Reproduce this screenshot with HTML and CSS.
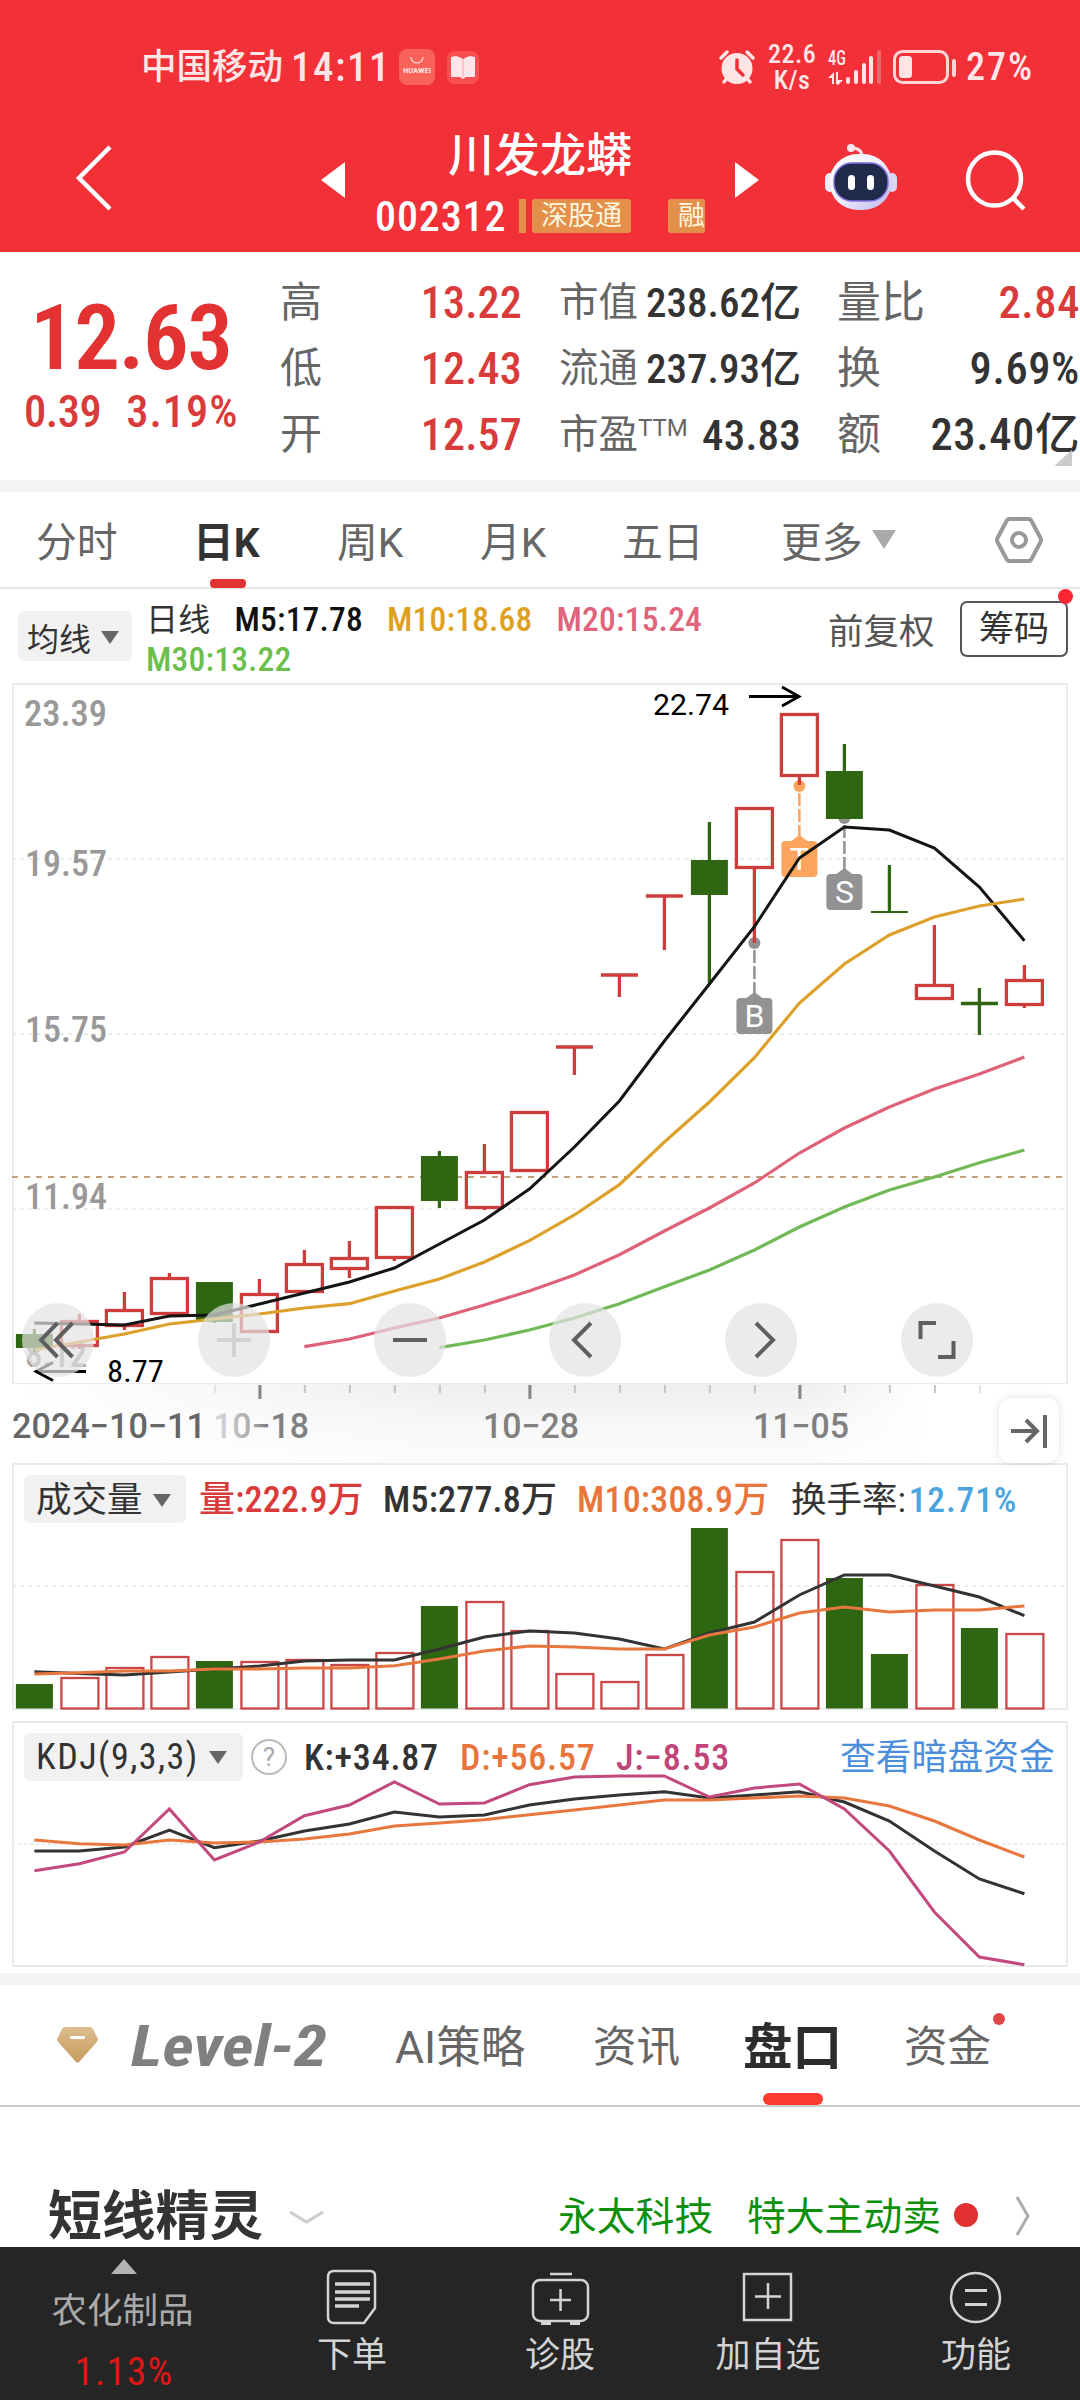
FILE: index.html
```html
<!DOCTYPE html>
<html lang="zh-CN">
<head>
<meta charset="utf-8">
<title>川发龙蟒 002312</title>
<link rel="stylesheet" href="styles.css">
</head>
<body>
<header class="top">
  <div class="status">
    <span class="carrier">中国移动</span><span class="clock">14:11</span>
    <svg class="app1" width="36" height="36" viewBox="0 0 36 36"><rect width="36" height="36" rx="8" fill="#f86258"/><path d="M12 8a6 6 0 0 0 12 0" fill="none" stroke="#ffc9c5" stroke-width="1.5"/><text x="4" y="24" textLength="28" lengthAdjust="spacingAndGlyphs" font-size="7" font-weight="700" fill="#ffe3e0">HUAWEI</text></svg>
    <svg class="app2" width="32" height="33" viewBox="0 0 32 33"><rect width="32" height="33" rx="8" fill="#fa4f50"/><path d="M4 6l5-1 3 1 4 2 4-2 3-1 5 1v20h-9l-3 2-3-2H4z" fill="#ffe6ea"/><path d="M16 8v18" stroke="#f9bcc5" stroke-width="1.5"/></svg>
    <svg class="alarm" width="36" height="34" viewBox="0 0 36 34"><circle cx="18" cy="18.500" r="15.500" fill="#ffe6e6"/><path d="M2 8l6-6M34 8l-6-6M5 32l4-5M31 32l-4-5" stroke="#ffe6e6" stroke-width="3.500" stroke-linecap="round"/><path d="M18 10v9l6 6" fill="none" stroke="#f13038" stroke-width="3.500" stroke-linecap="round"/></svg>
    <span class="rate">22.6<br>K/s</span>
    <svg class="signal" width="54" height="36" viewBox="0 0 54 36" fill="#ffe6e6"><text x="0" y="16" font-size="20" font-weight="500" textLength="18" lengthAdjust="spacingAndGlyphs">4G</text><path d="M4 35V29H0l6-6v12zM10 23v8h5l-5 5-2-1V23z"/><rect x="18" y="28" width="4" height="7" rx="2"/><rect x="26" y="21" width="4" height="14" rx="2"/><rect x="34" y="14" width="4" height="21" rx="2"/><rect x="41" y="7" width="4" height="28" rx="2"/><rect x="49" y="1" width="4" height="34" rx="2" opacity=".3"/></svg>
    <svg class="battery" width="63" height="34" viewBox="0 0 63 34"><rect x="1.500" y="1.500" width="53" height="31" rx="8" fill="none" stroke="#ffd5d7" stroke-width="3"/><rect x="6" y="6" width="13" height="22" rx="3.500" fill="#ffe6e6"/><rect x="59" y="9" width="4" height="18" rx="2" fill="#ffd5d7"/></svg>
    <span class="pct">27%</span>
  </div>
  <nav class="nav">
    <svg class="back" width="37" height="66" viewBox="0 0 37 66"><path d="M34 2L3 33l31 31" fill="none" stroke="#fff" stroke-width="4.500"/></svg>
    <svg class="prev" width="24" height="36" viewBox="0 0 24 36"><path d="M24 0v36L0 18z" fill="#fff"/></svg>
    <div class="title">
      <h1>川发龙蟒</h1>
      <div class="code"><span class="num">002312</span><i class="sliver"></i><span class="tag">深股通</span><span class="tag cut">融</span></div>
    </div>
    <svg class="next" width="24" height="36" viewBox="0 0 24 36"><path d="M0 0v36l24-18z" fill="#fff"/></svg>
    <svg class="robot" width="72" height="67" viewBox="0 0 72 67">
      <defs><linearGradient id="shell" x1="0" y1="0" x2="1" y2="1"><stop offset="0" stop-color="#fff"/><stop offset=".5" stop-color="#f1edfc"/><stop offset="1" stop-color="#b9b5ee"/></linearGradient></defs>
      <path d="M37 13c0-6-3-9-10-9" fill="none" stroke="#fbdbe5" stroke-width="3"/><circle cx="26" cy="4" r="4" fill="#fce6ee"/>
      <rect x="0" y="29" width="10" height="19" rx="5" fill="#ecebf7"/><rect x="62" y="29" width="10" height="19" rx="5" fill="#d9d5f3"/>
      <rect x="4.500" y="10" width="62" height="56" rx="28" fill="url(#shell)"/>
      <rect x="9" y="19" width="54" height="38" rx="18" fill="#202b4b" stroke="#7d6fe0" stroke-width="1.500"/>
      <rect x="23" y="31" width="7" height="15" rx="3.500" fill="#fff"/><rect x="42" y="31" width="7" height="15" rx="3.500" fill="#fff"/>
    </svg>
    <svg class="search" width="60" height="60" viewBox="0 0 60 60"><circle cx="28.500" cy="29" r="26.500" fill="none" stroke="#fff" stroke-width="4.500"/><path d="M47 48l11 11" stroke="#fff" stroke-width="4.500"/></svg>
  </nav>
</header>

<section class="quote">
  <div class="price">
    <div class="last">12.63</div>
    <div class="chg"><span>0.39</span><span class="rise">3.19%</span></div>
  </div>
  <dl class="g1"><div><dt>高</dt><dd class="up">13.22</dd></div><div><dt>低</dt><dd class="up">12.43</dd></div><div><dt>开</dt><dd class="up">12.57</dd></div></dl>
  <dl class="g2"><div><dt>市值</dt><dd>238.62亿</dd></div><div><dt>流通</dt><dd>237.93亿</dd></div><div><dt>市盈<sup>TTM</sup></dt><dd class="pe">43.83</dd></div></dl>
  <dl class="g3"><div><dt>量比</dt><dd class="up">2.84</dd></div><div><dt>换</dt><dd>9.69%</dd></div><div><dt>额</dt><dd>23.40亿</dd></div></dl>
  <i class="fold"></i>
</section>

<nav class="periods">
  <span class="p1">分时</span><span class="p2 on">日K</span><span class="p3">周K</span><span class="p4">月K</span><span class="p5">五日</span><span class="p6">更多</span>
  <svg class="caret" width="24" height="19" viewBox="0 0 24 19"><path d="M0 0h24L12 19z" fill="#aaa"/></svg>
  <svg class="hex" width="48" height="46" viewBox="0 0 48 46" fill="none" stroke="#999" stroke-width="4"><path d="M14.500 2h19q2 0 3 2l9 17q1 2 0 4l-9 17q-1 2-3 2h-19q-2 0-3-2l-9-17q-1-2 0-4l9-17q1-2 3-2z"/><circle cx="24" cy="23" r="7"/></svg>
</nav>

<section class="ma">
  <button class="pill maBtn">均线<svg width="18" height="13" viewBox="0 0 18 13"><path d="M0 0h18L9 13z" fill="#666"/></svg></button>
  <div class="maVals"><span class="k">日线</span><span class="k">M5:17.78</span><span class="y">M10:18.68</span><span class="p">M20:15.24</span><br><span class="g">M30:13.22</span></div>
  <span class="adj">前复权</span>
  <button class="chips">筹码<i></i></button>
</section>

<section class="kline">
  <svg id="kline" width="1080" height="701" viewBox="0 683 1080 701"></svg>
  <div class="ctrls">
    <button><svg viewBox="0 0 72 74"><path d="M35.500 20L19 37l16.500 17M50.500 20L34 37l16.500 17"/></svg></button>
    <button class="off"><svg viewBox="0 0 72 74"><path d="M19 37h34M36 20v34"/></svg></button>
    <button><svg viewBox="0 0 72 74"><path d="M19 37h34"/></svg></button>
    <button><svg viewBox="0 0 72 74"><path d="M42 20L25 37l17 17"/></svg></button>
    <button><svg viewBox="0 0 72 74"><path d="M31 20l17 17-17 17"/></svg></button>
    <button><svg viewBox="0 0 72 74"><path d="M19.500 36V20h15.500M37 54h15.500V38"/></svg></button>
  </div>
</section>

<section class="axis">
  <svg id="axis" width="1080" height="79" viewBox="0 1384 1080 79"></svg>
  <button class="toEnd"><svg width="60" height="64" viewBox="0 0 60 64"><path d="M12 32h26M27 21l11 11-11 11M46 16v33" fill="none" stroke="#666" stroke-width="4"/></svg></button>
</section>

<section class="panel vol">
  <div class="head">
    <button class="pill">成交量<svg width="18" height="13" viewBox="0 0 18 13"><path d="M0 0h18L9 13z" fill="#666"/></svg></button>
    <span class="v1">量:222.9万</span><span class="v2">M5:277.8万</span><span class="v3">M10:308.9万</span><span class="v4">换手率:<b>12.71%</b></span>
  </div>
  <svg id="vol" width="1054" height="184" viewBox="13 1526 1054 184"></svg>
</section>

<section class="panel kdj">
  <div class="head">
    <button class="pill">KDJ(9,3,3)<svg width="18" height="13" viewBox="0 0 18 13"><path d="M0 0h18L9 13z" fill="#666"/></svg></button>
    <span class="help">?</span><span class="k1">K:+34.87</span><span class="k2">D:+56.57</span><span class="k3">J:−8.53</span><a>查看暗盘资金</a>
  </div>
  <svg id="kdj" width="1054" height="196" viewBox="13 1771 1054 196"></svg>
</section>

<nav class="tabs">
  <svg class="gem" width="41" height="36" viewBox="0 0 41 36"><defs><linearGradient id="gold" x1="0" y1="0" x2="0" y2="1"><stop offset="0" stop-color="#dcbd8e"/><stop offset="1" stop-color="#c69a5c"/></linearGradient></defs><path d="M8 0h25q2 0 3 2l5 10q0 2-2 4L22 35q-1.500 1-3 0L2 16q-2-2-2-4L5 2q1-2 3-2z" fill="url(#gold)"/><rect x="13" y="9" width="15" height="3" rx="1" fill="#fff"/></svg>
  <svg class="lv" width="200" height="46" viewBox="0 0 200 46"><text x="1" y="43" font-size="57" font-weight="700" font-style="italic" fill="#808080" textLength="196" lengthAdjust="spacingAndGlyphs">Level-2</text></svg>
  <span class="t1">AI策略</span><span class="t2">资讯</span><span class="t3">盘口</span><span class="t4">资金<i></i></span>
</nav>

<section class="genie">
  <h2>短线精灵</h2>
  <svg class="down" width="35" height="15" viewBox="0 0 35 15"><path d="M1 2l16.500 10L34 2" fill="none" stroke="#ccc" stroke-width="3"/></svg>
  <span class="n1">永太科技</span><span class="n2">特大主动卖</span><i></i>
  <svg class="go" width="16" height="40" viewBox="0 0 16 40"><path d="M2 1l11 19L2 39" fill="none" stroke="#aaa" stroke-width="3"/></svg>
</section>

<footer class="bar">
  <div class="sector"><svg width="26" height="15" viewBox="0 0 26 15"><path d="M0 15h26L13 0z" fill="#b4b4b4"/></svg><span>农化制品</span><b>1.13%</b></div>
  <div><svg width="56" height="56" viewBox="0 0 56 56"><path d="M10 2h36q5 0 5 5v32L40 54H10q-6 0-6-6V8q0-6 6-6z"/><path d="M11 15h35M11 23h35M11 30h35M11 37h24" stroke-width="3.500"/></svg><span>下单</span></div>
  <div><svg width="60" height="56" viewBox="0 0 60 56"><rect x="3" y="11" width="55" height="41" rx="7"/><path d="M30.500 20v22M20 31h21M20 5h22" /><path d="M11 54h10M40 54h10" stroke-width="4"/></svg><span>诊股</span></div>
  <div><svg width="56" height="56" viewBox="0 0 56 56"><rect x="4" y="5" width="47" height="46"/><path d="M28 14v26M15 27.500h26"/></svg><span>加自选</span></div>
  <div><svg width="56" height="56" viewBox="0 0 56 56"><circle cx="27.500" cy="28.500" r="24.500"/><path d="M17 21.500h22M17 35.500h22" stroke-width="3"/></svg><span>功能</span></div>
</footer>
<script src="chart.js"></script>
</body>
</html>
```
FILE: styles.css
```css
* { box-sizing: border-box; }
body { margin: 0; width: 1080px; height: 2400px; overflow: hidden; background: #fff; color: #333;
  font-family: "Roboto Condensed", "Noto Sans CJK SC", sans-serif; display: flex; flex-direction: column; }
h1, h2, dl, dd { margin: 0; font: inherit; }
button { font: inherit; color: inherit; border: 0; padding: 0; background: none; }
svg { display: block; flex: none; overflow: visible; }
svg text { font-family: "Roboto Condensed", sans-serif; }
svg text.wide { font-family: Roboto, sans-serif; }
i { display: block; flex: none; }
span { white-space: nowrap; }

/* status bar and title */
.top { height: 252px; background: #f13038; color: #fff; flex: none; }
.status { height: 104px; padding: 30px 0 0 141px; display: flex; align-items: center; color: #ffe6e6; line-height: 44px; }
.carrier { font-size: 35.500px; width: 150px; font-weight: 500; }
.clock { font-size: 41px; width: 108px; letter-spacing: 1.500px; font-weight: 500; }
.app2 { margin-left: 12px; }
.alarm { margin-left: 240px; }
.rate { font-size: 26px; line-height: 26px; margin-left: 13px; width: 48px; text-align: center; letter-spacing: .5px; font-weight: 500; }
.signal { margin-left: 12px; }
.battery { margin-left: 11px; }
.pct { font-size: 38px; margin-left: 10px; letter-spacing: 2px; font-weight: 500; }

.nav { height: 148px; display: flex; align-items: center; }
.back { margin-left: 76px; }
.prev { margin-left: 208px; margin-top: 3px; }
.title { margin-left: 30px; width: 330px; align-self: flex-start; padding-top: 23px; }
.title h1 { font-size: 46px; line-height: 56px; font-weight: 500; text-align: center; }
.code { margin-top: 16px; height: 34px; display: flex; align-items: center; }
.code .num { width: 144px; font-size: 42px; line-height: 34px; letter-spacing: .9px; font-weight: 500; flex: none; padding-top: 1px; }
.sliver { width: 7px; height: 34px; background: #e48f4a; }
.tag { margin-left: 6px; width: 99px; height: 34px; background: #e48f4a; border-radius: 3px; font-size: 27px; line-height: 34px; text-align: center; flex: none; color: #fff6dc; }
.tag.cut { margin-left: 37px; width: 37px; text-align: left; padding-left: 10px; }
.next { margin-left: 30px; margin-top: 3px; }
.robot { margin-left: 66px; margin-top: -2px; }
.search { margin-left: 69px; margin-top: 4px; }

/* quote summary */
.quote { position: relative; height: 240px; border-bottom: 12px solid #f4f4f4; display: flex; flex: none; }
.price { width: 280px; color: #e33232; font-weight: 500; }
.last { margin: 38px 0 0 30px; font-size: 91px; line-height: 96px; font-weight: 600; letter-spacing: -1.500px; }
.chg { display: flex; gap: 25px; margin: 3px 0 0 24px; font-size: 44.500px; line-height: 46px; letter-spacing: -.5px; color: #d93a3a; }
.rise { letter-spacing: 1px; }
.quote dl { padding-top: 18px; }
.quote dl div { height: 66px; display: flex; align-items: center; justify-content: space-between; line-height: 60px; }
.g1 { width: 242px; font-size: 42px; }
.g2 { width: 242px; margin-left: 37px; font-size: 39.500px; }
.g3 { width: 243px; margin-left: 36px; font-size: 44px; }
dt { color: #666; white-space: nowrap; }
dt sup { font: 24px/1 Roboto; vertical-align: 12px; letter-spacing: 0; }
dd { font-weight: 500; font-size: 44px; letter-spacing: .2px; white-space: nowrap; }
.g2 dd { font-size: 41px; letter-spacing: 0; }
.g2 dd.pe { font-size: 43px; letter-spacing: .2px; }
.g3 dd { font-size: 44.500px; letter-spacing: .6px; }
.up { color: #d93a3a; }
.fold { position: absolute; right: 8px; bottom: 14px; width: 18px; height: 16px; background: #ccc; clip-path: polygon(100% 0, 100% 100%, 0 100%); }

/* period tabs */
.periods { height: 97px; border-bottom: 2px solid #e6e6e6; display: flex; align-items: center; padding: 6px 0 0 36px; font: 40.800px/60px Roboto, "Noto Sans CJK SC", sans-serif; color: #666; flex: none; }
.p1 { width: 156px; } .p2 { width: 144px; } .p3 { width: 143px; } .p4 { width: 142px; } .p5 { width: 159px; } .p6 { width: 92px; }
.on { position: relative; font-weight: 700; color: #333; margin-left: 1px; }
.on::after { content: ""; position: absolute; left: 17px; top: 66px; width: 36px; height: 9px; border-radius: 4px; background: #e33232; }
.caret { margin-top: -6px; margin-left: -1px; }
.hex { margin-left: 99px; margin-top: -6px; }

/* moving averages */
.ma { height: 94px; display: flex; padding-left: 18px; flex: none; }
.pill { background: #f1f1f1; border-radius: 6px; display: flex; align-items: center; white-space: nowrap; flex: none; }
.maBtn { width: 114px; height: 50px; margin-top: 22px; padding: 2px 0 0 9px; font-size: 32px; gap: 10px; }
.maVals { margin: 11px 0 0 14px; width: 682px; font-size: 33.500px; line-height: 40px; font-weight: 500; }
.maVals span { margin-right: 24px; letter-spacing: .2px; }
.maVals .k { color: #111; } .maVals .y { color: #dfa022; } .maVals .p { color: #e0647c; } .maVals .g { color: #6bbf4b; }
.maVals .k:first-child { font-size: 32px; color: #333; font-weight: 400; }
.adj { font-size: 35.500px; line-height: 50px; margin-top: 18px; width: 132px; color: #555; }
.chips { position: relative; width: 108px; height: 56px; margin-top: 12px; border: 2px solid #555; border-radius: 7px; font-size: 35px; line-height: 54px; flex: none; }
.chips i { position: absolute; right: -7px; top: -14px; width: 15px; height: 15px; border-radius: 50%; background: #fb2634; }

/* candlesticks */
.kline { position: relative; height: 701px; flex: none; }
.ctrls { position: absolute; left: 22px; top: 620px; display: flex; gap: 103.800px; }
.ctrls button { width: 72px; height: 74px; border-radius: 50%; background: rgba(227, 227, 227, .7); }
.ctrls path { fill: none; stroke: #5f5f5f; stroke-width: 4; }
.ctrls .off path { stroke: #d2d2d2; }

.axis { position: relative; height: 79px; flex: none; background: linear-gradient(90deg, #fff 2%, rgba(255, 255, 255, 0) 42%, rgba(255, 255, 255, 0) 74%, #fff 86%), linear-gradient(#eee, #f8f8f8 55%, #fcfcfc); }
.toEnd { position: absolute; left: 999px; top: 14px; width: 60px; height: 65px; border-radius: 12px; background: #fff; box-shadow: 0 0 8px rgba(0, 0, 0, .12); z-index: 1; }

/* indicator panels */
.panel { flex: none; margin: 0 12px; border: 2px solid #ebebeb; padding-top: 10px; }
.panel > svg { margin-left: -1px; }
.vol { height: 247px; }
.kdj { height: 246px; margin-top: 11px; }
.head { display: flex; align-items: center; height: 48px; padding-left: 10px; font-size: 36px; line-height: 48px; }
.head .pill { height: 48px; padding-left: 12px; }
.head span, .head a { padding-top: 2px; }
.vol .head { margin-bottom: 3px; }
.kdj .head { margin-bottom: -10px; }
.vol .pill { width: 162px; font-size: 35.500px; gap: 10px; padding-top: 2px; }
.kdj .pill { width: 219px; letter-spacing: 1.500px; gap: 10px; }
.v1 { margin-left: 13px; width: 184px; color: #d93a3a; } .v2 { width: 194px; } .v3 { width: 214px; color: #e8763c; } .v4 { font-size: 35.500px; }
.v4 b { font-weight: 500; color: #4aa5de; margin-left: 3px; letter-spacing: .8px; }
.v1, .v2, .v3 { letter-spacing: .2px; font-weight: 500; }
.head .help { width: 36px; height: 36px; margin-left: 8px; padding: 0; border: 2px solid #bbb; border-radius: 50%; font: 26px/33px Roboto; text-align: center; color: #aaa; }
.k1 { margin-left: 17px; width: 156px; } .k2 { width: 156px; color: #e8763c; } .k3 { width: 224px; color: #c14478; }
.k1, .k2, .k3 { font-weight: 500; letter-spacing: .8px; }
.kdj a { color: #4b8fdc; font-size: 35.800px; }

/* section tabs */
.tabs { height: 134px; margin-top: 6px; border-top: 12px solid #f4f4f4; border-bottom: 2px solid #ccc; display: flex; align-items: center; font: 43.500px/64px Roboto, "Noto Sans CJK SC", sans-serif; color: #666; padding: 5px 0 0 57px; flex: none; }
.gem { margin-top: -5px; }
.lv { margin-left: 32px; margin-top: -4px; }
.t1 { margin-left: 65px; width: 198px; font-size: 44.500px; } .t2 { width: 150px; } .t3 { position: relative; width: 161px; font-size: 49.500px; font-weight: 700; color: #2d2d2d; }
.t3::after { content: ""; position: absolute; left: 20px; top: 77px; width: 60px; height: 12px; border-radius: 6px; background: #fb3a30; }
.t4 { position: relative; }
.t4 i { position: absolute; right: -14px; top: -3px; width: 12px; height: 12px; border-radius: 50%; background: #e04848; }

.genie { height: 140px; display: flex; align-items: center; padding: 80px 0 0 48px; flex: none; }
.genie h2 { font-size: 53.800px; line-height: 64px; font-weight: 700; width: 241px; }
.n1 { margin-left: 234px; width: 189px; } .n2 { width: 195px; }
.genie span { font-size: 38.800px; line-height: 50px; color: #0c900c; }
.genie i { width: 24px; height: 24px; border-radius: 50%; background: #e0302f; margin-left: 12px; margin-top: -5px; }
.go { margin-left: 37px; margin-top: -3px; }

/* bottom bar */
.bar { height: 153px; background: #252525; color: #d4d4d4; display: grid; grid-template-columns: 248px repeat(4, 208px); flex: none; }
.bar div { display: flex; flex-direction: column; align-items: center; padding-top: 22px; }
.bar div span { font-size: 35px; line-height: 44px; margin-top: 9px; }
.bar svg { fill: none; stroke: #d4d4d4; stroke-width: 2.500; }
.bar .sector { padding-top: 12px; }
.bar .sector svg { stroke: none; }
.bar .sector span { margin-top: 15px; margin-right: 3px; color: #aaa; font-size: 35.500px; }
.bar .sector b { font-weight: 400; font-size: 39px; line-height: 44px; margin-top: 17px; color: #e01616; letter-spacing: 1.300px; }
```
FILE: chart.js
```js
var RED = '#cf3c3c', GREEN = '#2f6612';
function cx(i) { return 34.4 + 45 * i; }
function el(tag, a) { return '<' + tag + ' ' + Object.keys(a).map(function (k) { return k + '="' + a[k] + '"'; }).join(' ') + '/>'; }
function seg(x1, y1, x2, y2, c, w, dash) {
  return el('line', { x1: x1, y1: y1, x2: x2, y2: y2, stroke: c, 'stroke-width': w, 'stroke-dasharray': dash || 'none' });
}
function curve(start, ys, c, w) {
  return el('polyline', { points: ys.map(function (y, i) { return cx(start + i) + ',' + y; }).join(' '), fill: 'none', stroke: c, 'stroke-width': w });
}
function label(x, y, s, len, size, c, weight, cls) {
  return '<text class="' + (cls || '') + '" x="' + x + '" y="' + y + '" textLength="' + len + '" lengthAdjust="spacingAndGlyphs" font-size="' + size + '" font-weight="' + (weight || 400) + '" fill="' + c + '">' + s + '</text>';
}
function frame(y1, y2) { return el('rect', { x: 13, y: y1 + 1, width: 1054, height: y2 - y1 - 2, fill: 'none', stroke: '#ebebeb', 'stroke-width': 2 }); }

// direction, high, body top, body bottom, low
var candles = [
  ['g', 1329, 1334, 1348, 1352], ['r', 1314, 1320, 1347, 1349], ['r', 1292, 1309, 1327, 1330], ['r', 1273, 1277, 1315, 1315],
  ['g', 1282, 1282, 1322, 1323], ['r', 1279, 1293, 1333, 1333], ['r', 1250, 1263, 1293, 1293], ['r', 1241, 1257, 1270, 1278],
  ['r', 1206, 1206, 1259, 1261], ['g', 1151, 1156, 1201, 1208], ['r', 1144, 1171, 1209, 1210], ['r', 1111, 1111, 1172, 1172],
  ['r', 1047, 1047, 1047, 1075], ['r', 975, 975, 975, 997], ['r', 896, 896, 896, 950], ['g', 822, 860, 895, 983],
  ['r', 807, 807, 869, 943], ['r', 713, 713, 777, 785], ['g', 744, 771, 819, 819], ['g', 865, 912, 912, 912],
  ['r', 925, 984, 1000, 1000], ['g', 988, 1003.5, 1003.5, 1035], ['r', 965, 979, 1006, 1008]
];

function marker(i, dot, top, s, c) {
  var x = cx(i);
  return el('circle', { cx: x, cy: dot, r: 6, fill: c }) + seg(x, dot + 7, x, top - 5, c, 2.5, '13 3') +
    '<path d="M' + (x - 8) + ' ' + top + 'l8-6 8 6z" fill="' + c + '"/>' +
    el('rect', { x: x - 18, y: top, width: 36, height: 36, rx: 4, fill: c }) +
    '<text class="wide" x="' + x + '" y="' + (top + 29) + '" text-anchor="middle" font-size="32" fill="#fff">' + s + '</text>';
}

var h = seg(12, 859, 1066, 859, '#dcdcdc', 1.2, '4 4') + seg(12, 1034, 1066, 1034, '#ebebeb', 2, '4 4') + seg(12, 1209, 1066, 1209, '#dcdcdc', 1.2, '4 4') + frame(683, 1385);
h += seg(12, 1177, 1066, 1177, '#bfa27a', 2, '6 6');
h += label(24, 726, '23.39', 83, 36, '#999', 500) + label(25, 876, '19.57', 82, 36, '#999', 500) + label(25, 1042, '15.75', 82, 36, '#999', 500) + label(25, 1209, '11.94', 82, 36, '#999', 500) + label(25, 1367, '8.12', 62, 36, '#999', 500);
h += marker(16, 943, 998, 'B', '#929292') + marker(17, 786, 841, 'T', '#fda55e') + marker(18, 818, 874, 'S', '#929292');
candles.forEach(function (k, i) {
  var x = cx(i), c = k[0] === 'g' ? GREEN : RED;
  if (k[2] === k[3]) {
    h += seg(x - 18.5, k[2], x + 18.5, k[2], c, i === 19 ? 2 : 3.5) + seg(x, k[1], x, k[4], c, 3.3);
  } else {
    h += seg(x, k[1], x, k[2], c, 3.3) + seg(x, k[3], x, k[4], c, 3.3);
    h += k[0] === 'g' ? el('rect', { x: x - 18.5, y: k[2], width: 37, height: k[3] - k[2], fill: c })
      : el('rect', { x: x - 18, y: k[2] + 1.5, width: 36, height: k[3] - k[2] - 3, fill: 'none', stroke: c, 'stroke-width': 3.3 });
  }
});
h += curve(0, [1323, 1324, 1325, 1316, 1315, 1304, 1293, 1282, 1268, 1244, 1220, 1189, 1147, 1101, 1041, 984, 926.7, 858, 827, 830, 848, 887, 940.7], '#141414', 3);
h += curve(0, [1350, 1342, 1334, 1324, 1319, 1314, 1308, 1303.7, 1291, 1279, 1262, 1240.7, 1215, 1184.7, 1142, 1102, 1057.7, 1003, 964, 935, 917, 906, 899], '#dda02a', 3.2);
h += curve(6, [1346.7, 1339, 1328, 1318, 1305, 1291, 1275, 1254.7, 1231, 1208, 1183, 1153, 1128, 1107, 1089, 1074, 1057], '#de6378', 3.2);
h += curve(9, [1347.7, 1340, 1330, 1318, 1303.7, 1286.7, 1270, 1250, 1227, 1207, 1190, 1177, 1162.7, 1150], '#70b956', 3.2);
h += '<path d="M86 1371.500H36M53 1362.500l-17 9 17 9M749 696.500h50M782 687l17 9.500-17 9.500" fill="none" stroke="#000" stroke-width="2.800"/>';
h += label(107, 1382, '8.77', 57, 31, '#000') + label(653, 715, '22.74', 76, 30, '#000', 400, 'wide');
document.getElementById('kline').innerHTML = h;

h = '<defs><linearGradient id="fade"><stop offset="0" stop-color="#ddd"/><stop offset=".4" stop-color="#aaa"/><stop offset=".55" stop-color="#808080"/></linearGradient></defs>';
for (var i = 4; i < 22; i++) {
  var major = i === 5 || i === 11 || i === 17;
  h += seg(cx(i) + .5, 1385, cx(i) + .5, major ? 1399 : 1393, major ? '#858585' : (i === 4 || i === 21 ? '#e2e2e2' : '#c4c4c4'), major ? 3 : 2);
}
h += label(12, 1438, '2024−10−11', 194, 35, '#666', 500, 'wide') + label(213, 1438, '10−18', 96, 35, 'url(#fade)', 500, 'wide') + label(483, 1438, '10−28', 96, 35, '#808080', 500, 'wide') + label(753, 1438, '11−05', 96, 35, '#808080', 500, 'wide');
document.getElementById('axis').innerHTML = h;

var bars = [1684, 1677, 1667, 1656, 1661, 1661, 1659, 1664, 1652, 1606, 1601, 1630, 1673, 1681, 1654, 1528, 1571, 1539, 1578, 1654, 1584, 1628, 1633];
h = seg(12, 1586, 1066, 1586, '#ebebeb', 2, '4 4');
bars.forEach(function (y, i) {
  h += candles[i][0] === 'g' ? el('rect', { x: cx(i) - 18.5, y: y, width: 37, height: 1708.5 - y, fill: GREEN })
    : el('rect', { x: cx(i) - 18, y: y + 1, width: 37, height: 1707.5 - y, fill: 'none', stroke: '#cb4646', 'stroke-width': 2.3 });
});
h += curve(0, [1671.7, 1673.5, 1675, 1672, 1669, 1666, 1661, 1660, 1660, 1649, 1637, 1631, 1633, 1639, 1649, 1633, 1622, 1595, 1575, 1575, 1586, 1597, 1615.7], '#333', 3);
h += curve(0, [1674, 1672.7, 1671, 1671, 1669, 1669, 1668, 1668, 1665.7, 1659, 1651, 1646, 1647, 1649, 1649, 1635, 1627, 1613, 1607, 1612, 1610, 1610, 1606], '#e8773f', 3);
document.getElementById('vol').innerHTML = h;

h = seg(12, 1844, 1066, 1844, '#ebebeb', 2, '3 3');
h += curve(0, [1851, 1851, 1847, 1830, 1847.7, 1841, 1831, 1824, 1812, 1817, 1815, 1805, 1799, 1795, 1791.7, 1798, 1795, 1791.7, 1802, 1821, 1851, 1879, 1893.7], '#333', 3);
h += curve(0, [1840, 1843.7, 1845, 1840, 1843, 1842, 1839, 1834, 1826, 1823, 1819.7, 1814.7, 1810, 1805, 1800, 1800, 1798, 1796, 1798, 1806, 1821, 1840, 1857], '#e8773f', 3);
h += curve(0, [1870.7, 1863.7, 1852, 1809, 1860, 1842, 1815.7, 1805, 1782, 1804, 1803, 1784.7, 1777, 1776, 1776, 1797, 1788, 1784, 1809, 1851, 1912, 1957, 1964.7], '#c2487e', 3);
document.getElementById('kdj').innerHTML = h;
```
